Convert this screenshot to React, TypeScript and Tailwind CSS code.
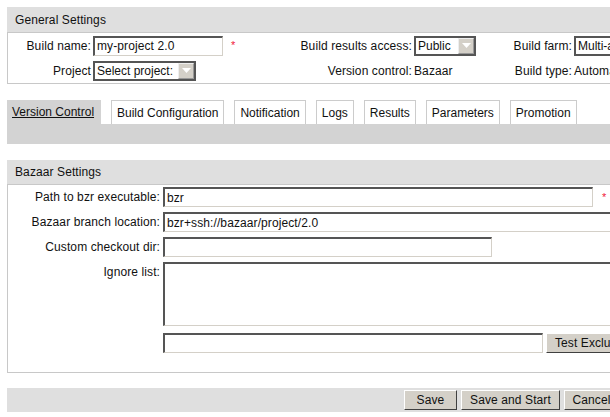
const inputCls =
  "h-[20px] shrink-0 border-t-2 border-l-2 border-r border-b border-t-[#555] border-l-[#555] border-r-[#d4d0c8] border-b-[#d4d0c8] bg-white px-[2px] text-[12px] text-[#111] outline-none";

const btnCls =
  "h-[20px] shrink-0 border border-t-white border-l-white border-r-[#404040] border-b-[#404040] bg-[#d4d0c8] text-[12px] text-[#111] leading-none";

const Select = ({ value, w }: { value: string; w: string }) => (
  <div className={`flex h-[20px] items-stretch border-2 border-[#555] bg-white ${w}`}>
    <span className="flex-1 overflow-hidden whitespace-nowrap px-[2px] leading-[16px] tracking-normal text-[#111]">
      {value}
    </span>
    <span className="flex w-[16px] shrink-0 items-center justify-center border border-t-[#eee] border-l-[#eee] border-r-[#999] border-b-[#999] bg-[#d4d0c8]">
      <svg width="9" height="5" viewBox="0 0 9 5">
        <path d="M0 0h9L4.5 5z" fill="#fff" />
      </svg>
    </span>
  </div>
);

const Req = () => <span className="text-[11px] text-[#f0203c]">*</span>;

const tabs = ["Build Configuration", "Notification", "Logs", "Results", "Parameters", "Promotion"];

const App = () => {
  return (
    <div className="h-[417px] w-[610px] overflow-hidden bg-white font-['Liberation_Sans',Arial,sans-serif] text-[12px] tracking-[0.1px] text-[#111]">
      <div className="w-[627px] pl-[7px] pt-[7px]">
        {/* General Settings */}
        <div className="w-[620px]">
          <div className="flex h-[26px] items-center border-b border-[#c8c8c8] bg-[#dfdfdf] px-[8px]">
            General Settings
          </div>
          <div className="grid grid-cols-[83px_195px_122px_83px_73px_1fr] grid-rows-[25px_25px] items-center gap-x-[2px] border-x border-b border-[#c8c8c8]">
            <span className="text-right">Build name:</span>
            <div className="flex items-center gap-[8px]">
              <input className={`${inputCls} w-[130px]`} defaultValue="my-project 2.0" />
              <Req />
            </div>
            <span className="whitespace-nowrap text-right">Build results access:</span>
            <Select value="Public" w="w-[62px]" />
            <span className="text-right">Build farm:</span>
            <Select value="Multi-agent" w="w-[80px]" />

            <span className="text-right">Project</span>
            <Select value="Select project:" w="w-[103px]" />
            <span className="text-right">Version control:</span>
            <span>Bazaar</span>
            <span className="text-right">Build type:</span>
            <span className="whitespace-nowrap">Automatic</span>
          </div>
        </div>

        {/* Tabs */}
        <div className="mt-[16px] w-[620px]">
          <div className="flex h-[24px] gap-[10px] tracking-normal">
            <div className="flex w-[94px] items-center bg-[#d3d3d3] px-[5px] underline">Version Control</div>
            {tabs.map((t) => (
              <div key={t} className="flex items-center border border-b-0 border-[#ccc] bg-white px-[5px]">
                {t}
              </div>
            ))}
          </div>
          <div className="h-[20px] bg-[#d3d3d3]" />
        </div>

        {/* Bazaar Settings */}
        <div className="mt-[16px] w-[620px]">
          <div className="flex h-[25px] items-center border-b border-[#c8c8c8] bg-[#dfdfdf] px-[8px]">
            Bazaar Settings
          </div>
          <div className="flex flex-col gap-[5px] border-x border-b border-[#c8c8c8] pb-[19px] pt-[2px]">
            <div className="flex items-center gap-[3px]">
              <span className="w-[152px] text-right">Path to bzr executable:</span>
              <input className={`${inputCls} w-[430px]`} defaultValue="bzr" />
              <span className="ml-[6px]">
                <Req />
              </span>
            </div>
            <div className="flex items-center gap-[3px]">
              <span className="w-[152px] text-right">Bazaar branch location:</span>
              <input className={`${inputCls} w-[460px]`} defaultValue="bzr+ssh://bazaar/project/2.0" />
            </div>
            <div className="flex items-center gap-[3px]">
              <span className="w-[152px] text-right">Custom checkout dir:</span>
              <input className={`${inputCls} w-[329px]`} />
            </div>
            <div className="flex items-start gap-[3px]">
              <span className="w-[152px] pt-[1px] text-right">Ignore list:</span>
              <textarea className={`${inputCls} h-[64px] w-[460px] resize-none`} />
            </div>
            <div className="mt-[2px] flex items-center gap-[3px] pl-[155px]">
              <input className={`${inputCls} w-[380px]`} />
              <button className={`${btnCls} w-[96px] whitespace-nowrap`}>Test Exclusion</button>
            </div>
          </div>
        </div>

        {/* Bottom bar */}
        <div className="mt-[15px] flex h-[24px] w-[620px] items-center justify-end gap-[4px] bg-[#dfdfdf] pr-[8px]">
          <button className={`${btnCls} w-[53px]`}>Save</button>
          <button className={`${btnCls} w-[99px]`}>Save and Start</button>
          <button className={`${btnCls} w-[55px]`}>Cancel</button>
        </div>
      </div>
    </div>
  );
};

export default App;
